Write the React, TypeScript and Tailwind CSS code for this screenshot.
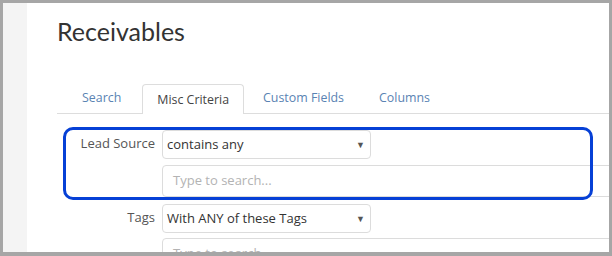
const tabs = [
  { label: "Search", active: false },
  { label: "Misc Criteria", active: true },
  { label: "Custom Fields", active: false },
  { label: "Columns", active: false },
];

function SelectBox({ value }: { value: string }) {
  return (
    <div className="flex h-[29px] w-[209px] items-center justify-between rounded-[4px] border border-[#dcdcdc] bg-white pl-[4px] pr-[5px] text-[13px] text-[#333]">
      <span>{value}</span>
      <span className="text-[9px] leading-none text-[#555]">▼</span>
    </div>
  );
}

function SearchBox() {
  return (
    <div className="flex h-[32px] w-[480px] shrink-0 items-center rounded-[4px] border border-[#dcdcdc] bg-white pl-[10px] text-[13px] text-[#b3b3b3]">
      Type to search...
    </div>
  );
}

export default function App() {
  return (
    <div
      className="flex h-[256px] w-[612px] bg-[#a6a6a6] pt-[3px] pr-[3px] pb-[4px] pl-[3px]"
      style={{ fontFamily: "'Open Sans', Lato, sans-serif" }}
    >
      <div className="w-[24px] shrink-0 bg-[#f4f4f4]" />
      <div className="relative flex-1 overflow-hidden bg-white pl-[30px]">
        {/* Titel */}
        <h1
          className="mt-[13px] text-[25px] leading-[30px] text-[#333]"
          style={{ fontFamily: "Lato, sans-serif" }}
        >
          Receivables
        </h1>

        {/* Tabs */}
        <div className="mt-[38px] flex border-b border-[#dddddd] pl-[11px]">
          {tabs.map((t) =>
            t.active ? (
              <div
                key={t.label}
                className="-mb-px mr-[5px] rounded-t-[4px] border border-b-0 border-[#dddddd] bg-white px-[14px] pb-[6px] pt-[7px] text-[12.4px] leading-[16px] text-[#444]"
              >
                {t.label}
              </div>
            ) : (
              <div
                key={t.label}
                className="mr-[7px] px-[14px] pb-[7px] pt-[6px] text-[12.4px] leading-[16px] text-[#5a83b3]"
              >
                {t.label}
              </div>
            )
          )}
        </div>

        {/* Formular */}
        <div className="mt-[16px] flex flex-col">
          <div className="flex">
            <div className="w-[98px] shrink-0 pt-[4px] text-right text-[13px] text-[#555]">
              Lead Source
            </div>
            <div className="ml-[7px] flex flex-col gap-[6px]">
              <SelectBox value="contains any" />
              <SearchBox />
            </div>
          </div>
          <div className="mt-[7px] flex">
            <div className="w-[98px] shrink-0 pt-[4px] text-right text-[13px] text-[#555]">
              Tags
            </div>
            <div className="ml-[7px] flex flex-col gap-[5px]">
              <SelectBox value="With ANY of these Tags" />
              <SearchBox />
            </div>
          </div>
        </div>

        {/* Markierung */}
        <div className="pointer-events-none absolute left-[36px] top-[124px] h-[73px] w-[530px] rounded-[10px] border-[3px] border-[#0640d6]" />
      </div>
    </div>
  );
}
